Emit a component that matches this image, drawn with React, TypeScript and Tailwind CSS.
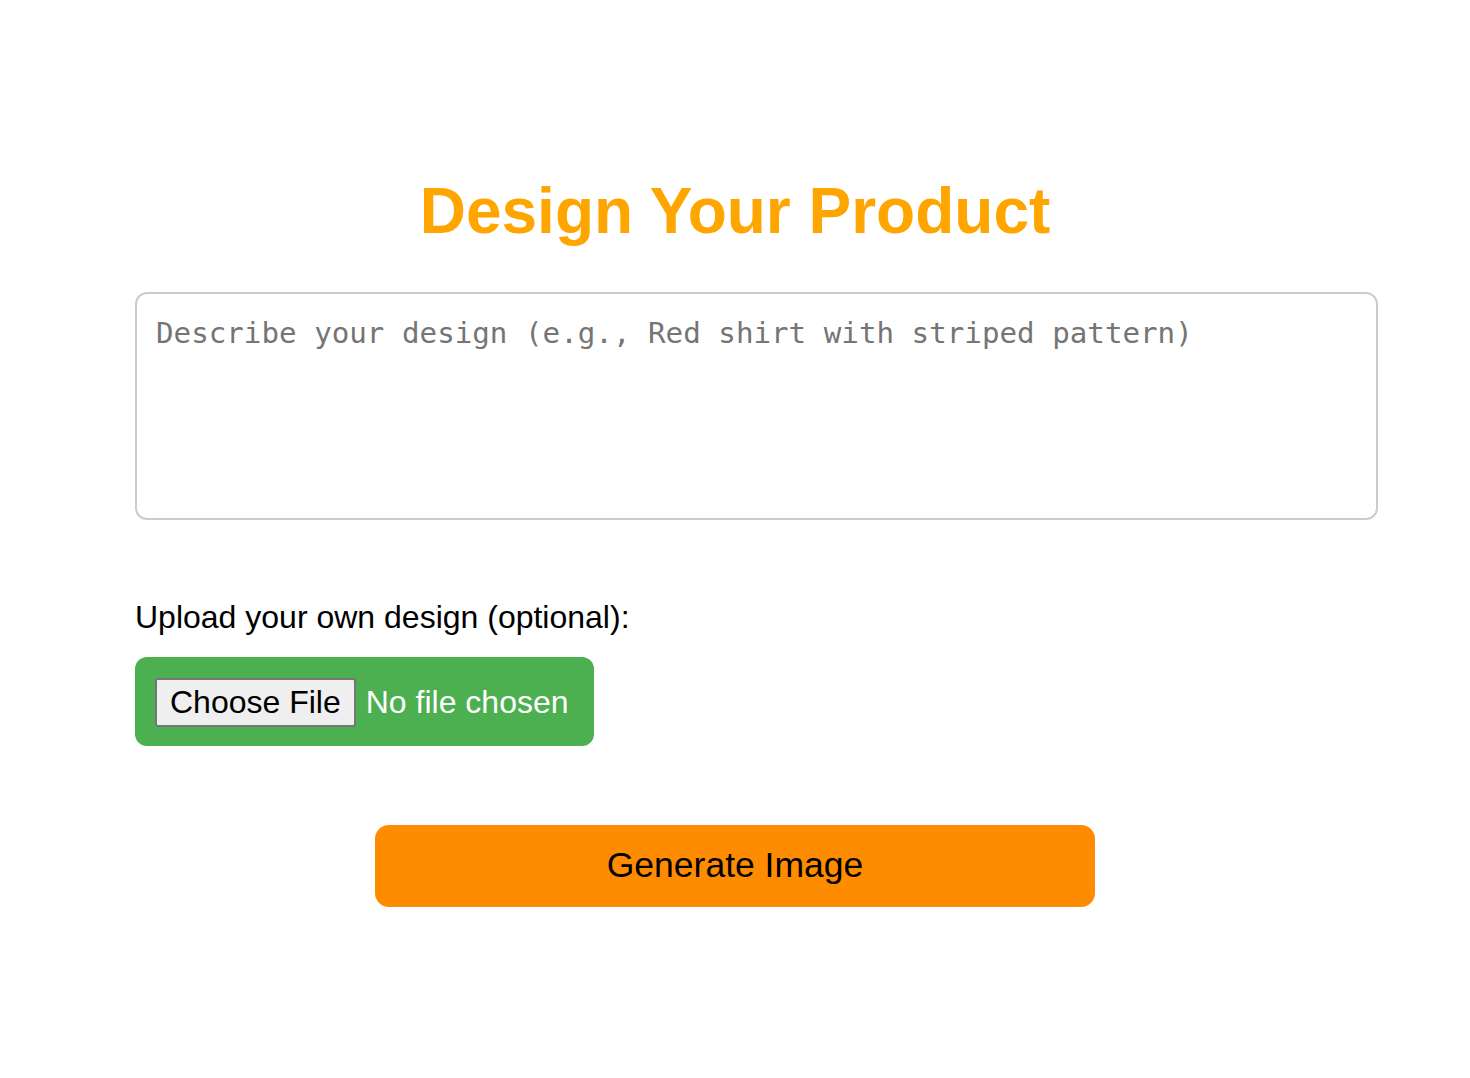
import React, { useState } from 'react';

const App: React.FC = () => {
  const [prompt, setPrompt] = useState('');
  const [fileName, setFileName] = useState('');

  return (
    <div className="min-h-screen bg-white font-['Liberation_Sans',Arial,sans-serif]">
      <div className="mx-auto max-w-[1200px] pt-[174px] pb-20">
        <h1 className="text-center text-[64px] leading-[normal] font-bold text-[#ffa500]">Design Your Product</h1>

        <textarea
          value={prompt}
          onChange={e => setPrompt(e.target.value)}
          placeholder="Describe your design (e.g., Red shirt with striped pattern)"
          className="mt-[44px] block h-[228px] w-[1243px] resize-none rounded-[12px] border-2 border-[#cccccc] px-[19px] pt-[18px] pb-[20px] font-['DejaVu_Sans_Mono',monospace] text-[29.2px] text-gray-900 outline-none placeholder:text-[#757575]"
        />

        {/* Upload */}
        <p className="mt-[79px] text-[32px] leading-[normal] text-black">Upload your own design (optional):</p>
        <label className="mt-[21px] inline-flex cursor-pointer items-center rounded-[12px] bg-[#4caf50] pt-[21px] pb-[19px] pl-[20px] pr-[25px] text-[32px] leading-[normal]">
          <input
            type="file"
            className="hidden"
            onChange={e => setFileName(e.target.files?.[0]?.name ?? '')}
          />
          <span className="rounded-[3px] border-2 border-[#767676] bg-[#efefef] px-[13px] py-[4px] text-black">Choose File</span>
          <span className="ml-[10px] text-white">{fileName || 'No file chosen'}</span>
        </label>

        <button className="mx-auto mt-[79px] block h-[82px] w-[720px] rounded-[14px] bg-[#ff8c00] text-[35.5px] text-black">
          Generate Image
        </button>
      </div>
    </div>
  );
};

export default App;
